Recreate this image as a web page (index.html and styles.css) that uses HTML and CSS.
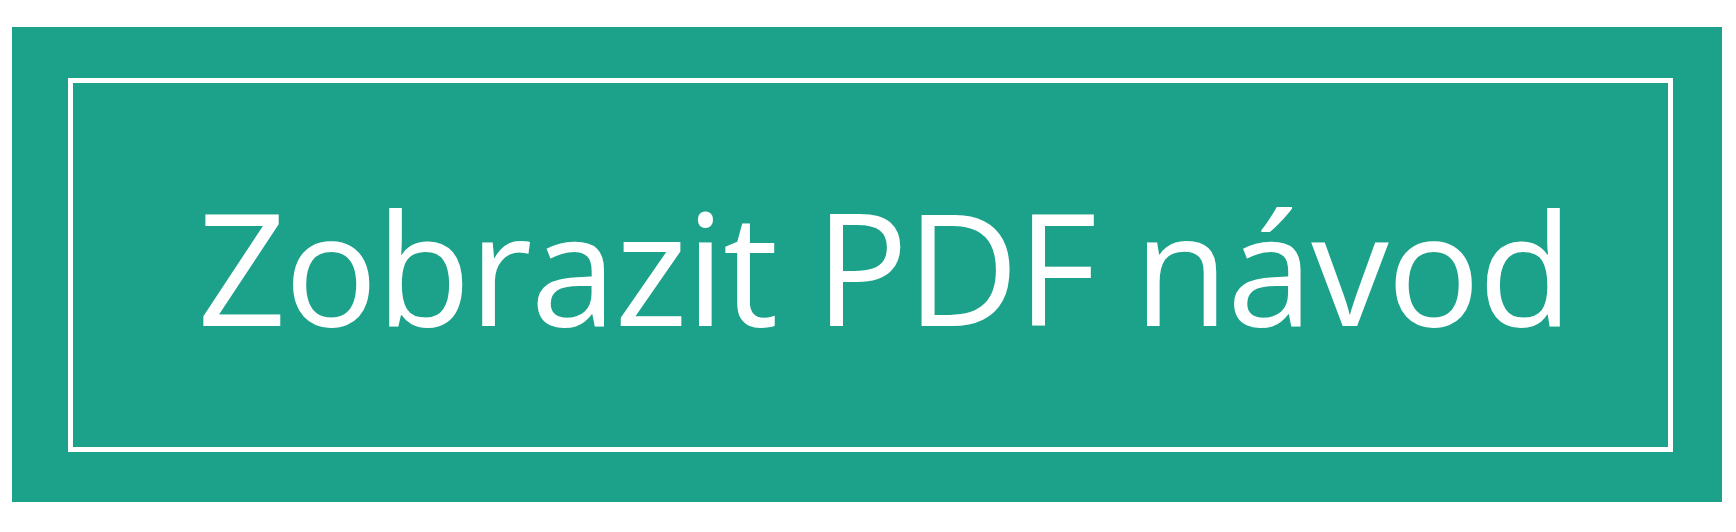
FILE: index.html
```html
<!DOCTYPE html>
<html lang="cs">
<head>
<meta charset="utf-8">
<title>Zobrazit PDF návod</title>
<link rel="stylesheet" href="styles.css">
</head>
<body>
<div class="banner">
  <div class="frame">
    <span class="label">Zobrazit PDF návod</span>
  </div>
</div>
</body>
</html>
```
FILE: styles.css
```css
html, body {
  margin: 0;
  padding: 0;
  background: #ffffff;
}
body {
  width: 1736px;
  height: 532px;
  overflow: hidden;
}
.banner {
  box-sizing: border-box;
  margin: 27px 0 0 12px;
  width: 1710px;
  height: 475px;
  background: #1ca28a;
  padding: 51px 49px 50px 56px;
}
.frame {
  box-sizing: border-box;
  width: 1605px;
  height: 374px;
  border: 5px solid #ffffff;
  display: flex;
  align-items: center;
  justify-content: center;
}
.label {
  font-family: "Open Sans", "Noto Sans", sans-serif;
  font-size: 155px;
  line-height: 1;
  letter-spacing: -1.8px;
  margin-left: 28px;
  color: #ffffff;
  white-space: nowrap;
}
```
